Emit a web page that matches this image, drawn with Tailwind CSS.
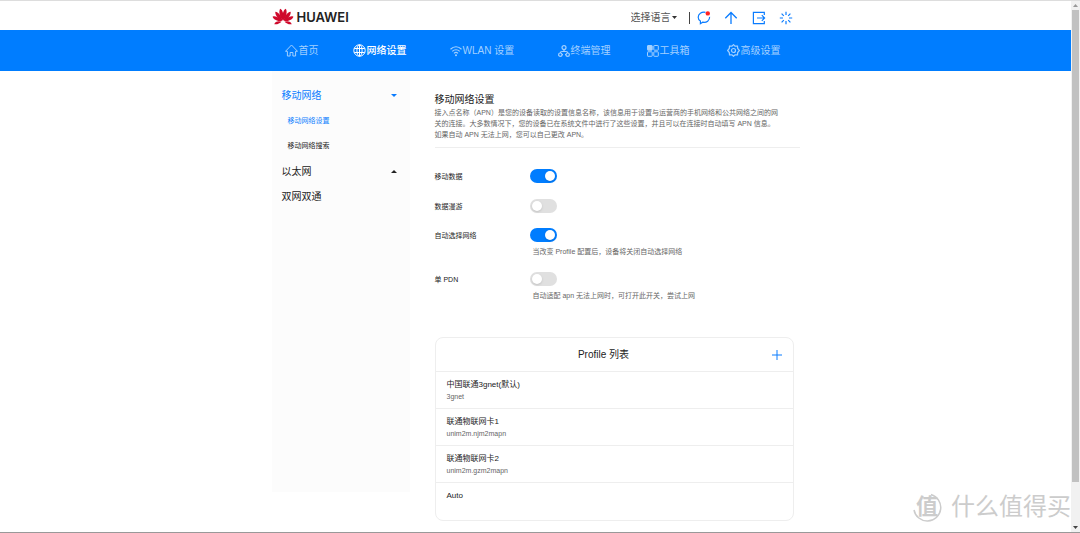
<!DOCTYPE html>
<html lang="zh-CN">
<head>
<meta charset="utf-8">
<meta name="viewport" content="width=device-width, initial-scale=1">
<title>移动网络设置</title>
<script src="https://cdn.jsdelivr.net/npm/@tailwindcss/browser@4"></script>
</head>
<body class="relative min-h-screen bg-white font-['Liberation_Sans','Noto_Sans_CJK_SC',sans-serif] text-[10px] leading-4 text-[#222]">
<div class="flex min-h-screen border-t border-[#ddd] border-b border-b-[#999]">
  <div class="min-w-0 flex-1">
    <header class="mx-auto flex h-[29px] max-w-[528px] items-center justify-between">
      <a href="#" class="flex items-center gap-[3px] pt-[2px] font-['Inter',sans-serif] text-[13px] font-semibold text-[#222]">
        <svg class="h-[18px] w-[22px]" viewBox="0 0 44 36" fill="#cf0a2c" aria-hidden="true">
          <path transform="rotate(-12 22 27)" d="M22 25C17.500 17 17 5 22 1c5 4 4.500 16 0 24z"/>
          <path transform="rotate(12 22 27)" d="M22 25C17.500 17 17 5 22 1c5 4 4.500 16 0 24z"/>
          <path transform="rotate(-38 22 27)" d="M22 25C17.500 18 17 7 22 2c5 5 4.500 16 0 23z"/>
          <path transform="rotate(38 22 27)" d="M22 25C17.500 18 17 7 22 2c5 5 4.500 16 0 23z"/>
          <path transform="rotate(-65 22 27)" d="M22 25C18 19 17 9 22 4c5 5 4 15 0 21z"/>
          <path transform="rotate(65 22 27)" d="M22 25C18 19 17 9 22 4c5 5 4 15 0 21z"/>
          <path transform="rotate(-98 22 27)" d="M22 24C20 20 17 15 19 9c6 2 6 10 3 15z"/>
          <path transform="rotate(98 22 27)" d="M22 24C24 20 27 15 25 9c-6 2-6 10-3 15z"/>
        </svg>
        <span>HUAWEI</span>
      </a>
      <div class="flex items-center pt-1 pr-[7px] text-[#0a7cff]">
        <label class="relative flex items-center text-[#555]">
          <select aria-label="选择语言" class="w-[46px] appearance-none bg-transparent text-[10px] leading-4"><option>选择语言</option><option>English</option></select>
          <svg class="pointer-events-none absolute right-0 h-[3px] w-[5px]" viewBox="0 0 5 3" fill="#333"><path d="M0 0h5L2.500 3z"/></svg>
        </label>
        <span class="ml-3 h-3 w-px bg-[#444]"></span>
        <button aria-label="消息" class="ml-[7px]"><svg class="size-[14px]" viewBox="0 0 14 14" fill="none" stroke="currentColor" stroke-width="1.200"><path d="M8.500 1.300C4.500.600 1.200 2.700 1.200 6.200c0 1.800.800 3 2.200 3.800v2.700l2.300-1.500c4 .700 7.100-1.600 6.900-5.300"/><circle cx="10.800" cy="2.400" r="2.200" fill="#f22" stroke="none"/></svg></button>
        <button aria-label="升级" class="ml-[13px]"><svg class="size-[14px]" viewBox="0 0 14 14" fill="none" stroke="currentColor" stroke-width="1.300"><path d="M7 13V1.500M1.300 7.200 7 1.500l5.700 5.700"/></svg></button>
        <button aria-label="退出" class="ml-[14px]"><svg class="size-[14px]" viewBox="0 0 14 14" fill="none" stroke="currentColor" stroke-width="1.200"><path d="M12.300 4V1.400H1.400v11.200h10.900V10M5 7h7.500M9.800 4.200 12.600 7 9.800 9.800"/></svg></button>
        <button aria-label="重启" class="ml-[13px]"><svg class="size-[14px]" viewBox="0 0 14 14" fill="none" stroke="currentColor" stroke-width="1.200"><path d="M7 .800v3.200M7 10v3.200M.800 7H4M10 7h3.200M2.600 2.600l2.200 2.200M9.200 9.200l2.200 2.200M11.400 2.600 9.200 4.800M4.800 9.200l-2.200 2.200"/></svg></button>
      </div>
    </header>

    <nav class="bg-[#007dff] text-[#a3d0ff]">
      <div class="mx-auto grid h-[41px] max-w-[528px] grid-cols-[68px_97px_108px_89px_80px_1fr] items-center pl-[13px] whitespace-nowrap">
        <a href="#" class="flex items-center gap-px"><svg class="size-[13px]" viewBox="0 0 13 13" fill="none" stroke="currentColor"><path d="M.500 7.300 6.500 1l6 6.300H10.600V12H7.900V8.500H5.100V12H2.400V7.300z"/></svg>首页</a>
        <a href="#" class="flex items-center gap-px font-medium text-white" aria-current="page"><svg class="size-[13px]" viewBox="0 0 13 13" fill="none" stroke="currentColor"><circle cx="6.500" cy="6.500" r="5.700"/><ellipse cx="6.500" cy="6.500" rx="2.600" ry="5.700"/><path d="M6.500 1v11M1.300 4.500h10.400M1.300 8.500h10.400"/></svg>网络设置</a>
        <a href="#" class="flex items-center gap-px"><svg class="size-[12px]" viewBox="0 0 12 12" fill="none" stroke="currentColor" stroke-width="1.200"><path d="M.500 4.300c3.300-3.200 7.700-3.200 11 0M2.300 6.400c2.200-2.200 5.200-2.200 7.400 0M4 8.400c1.200-1.200 2.800-1.200 4 0"/><circle cx="6" cy="10.200" r="1" fill="currentColor" stroke="none"/></svg>WLAN 设置</a>
        <a href="#" class="flex items-center gap-px"><svg class="size-[12px]" viewBox="0 0 12 12" fill="none" stroke="currentColor" stroke-width="1.200"><circle cx="6" cy="2.600" r="2"/><circle cx="2.300" cy="9.700" r="1.700"/><circle cx="9.700" cy="9.700" r="1.700"/><path d="M6 4.600v1.900M2.300 8C2.300 7 3 6.500 4 6.500h4c1 0 1.700.500 1.700 1.500M4 9.700h1M8 9.700H7"/></svg>终端管理</a>
        <a href="#" class="flex items-center gap-px"><svg class="size-[12px]" viewBox="0 0 12 12" fill="none" stroke="currentColor"><rect x=".5" y=".5" width="4.700" height="4.700" rx=".5" fill="currentColor"/><rect x="6.800" y=".5" width="4.500" height="4.700" rx=".5"/><rect x=".5" y="6.800" width="4.700" height="4.500" rx=".5"/><rect x="6.800" y="6.800" width="4.500" height="4.500" rx=".5"/></svg>工具箱</a>
        <a href="#" class="flex items-center gap-px"><svg class="size-[13px]" viewBox="0 0 13 13" fill="none" stroke="currentColor" stroke-width="1.200"><path d="M6.500.700 8 2.200l2.500-.1.200 2.300 1.700 2.100-1.700 2.100-.2 2.300-2.500-.1-1.500 1.500L5 10.800l-2.500.1-.2-2.300L.600 6.500l1.700-2.100.2-2.300 2.500.1z"/><circle cx="6.500" cy="6.500" r="2"/></svg>高级设置</a>
      </div>
    </nav>

    <div class="mx-auto flex max-w-[528px] items-start">
      <aside class="min-h-[421px] w-[138px] shrink-0 bg-[#fcfcfc] pt-3 pr-[13px] pl-[10px]">
        <a href="#" class="flex h-[25px] items-center justify-between text-[#0a7cff]">移动网络<svg class="h-[3px] w-[6px]" viewBox="0 0 6 3" fill="currentColor"><path d="M0 0h6L3 3z"/></svg></a>
        <a href="#" class="flex h-[25px] items-center pl-[6px] text-[7px] text-[#0a7cff]">移动网络设置</a>
        <a href="#" class="flex h-[25px] items-center pl-[6px] text-[7px]">移动网络搜索</a>
        <a href="#" class="mt-px flex h-[25px] items-center justify-between">以太网<svg class="h-[3px] w-[6px]" viewBox="0 0 6 3" fill="currentColor"><path d="M0 3h6L3 0z"/></svg></a>
        <a href="#" class="flex h-[25px] items-center">双网双通</a>
      </aside>

      <main class="ml-[25px] min-w-0 flex-1 pt-[21px]">
        <h1 class="text-[10px] leading-[15px]">移动网络设置</h1>
        <p class="whitespace-nowrap border-b border-[#eee] pb-[7px] text-[7px] leading-[11px] text-[#666]">接入点名称（APN）是您的设备读取的设置信息名称，该信息用于设置与运营商的手机网络和公共网络之间的网<br>关的连接。大多数情况下，您的设备已在系统文件中进行了这些设置，并且可以在连接时自动填写 APN 信息。<br>如果自动 APN 无法上网，您可以自己更改 APN。</p>

        <form class="pt-[13px] text-[7px]">
          <div class="flex h-[30px] pt-2">
            <label for="data" class="w-[95px] leading-4">移动数据</label>
            <input id="data" type="checkbox" checked class="h-[14px] w-[27px] appearance-none rounded-full bg-[#e0e0e0] p-[2px] before:block before:size-[10px] before:rounded-full before:bg-white before:shadow-sm checked:bg-[#007dff] checked:before:ml-[13px]">
          </div>
          <div class="flex h-[30px] pt-2">
            <label for="roam" class="w-[95px] leading-4">数据漫游</label>
            <input id="roam" type="checkbox" class="h-[14px] w-[27px] appearance-none rounded-full bg-[#e0e0e0] p-[2px] before:block before:size-[10px] before:rounded-full before:bg-white before:shadow-sm checked:bg-[#007dff] checked:before:ml-[13px]">
          </div>
          <div class="flex h-[44px] pt-[7px]">
            <label for="auto" class="w-[95px] leading-4">自动选择网络</label>
            <div>
              <input id="auto" type="checkbox" checked class="block h-[14px] w-[27px] appearance-none rounded-full bg-[#e0e0e0] p-[2px] before:block before:size-[10px] before:rounded-full before:bg-white before:shadow-sm checked:bg-[#007dff] checked:before:ml-[13px]">
              <p class="mt-1 ml-[3px] leading-[11px] text-[#666]">当改变 Profile 配置后，设备将关闭自动选择网络</p>
            </div>
          </div>
          <div class="flex h-[44px] pt-[7px]">
            <label for="pdn" class="w-[95px] leading-4">单 PDN</label>
            <div>
              <input id="pdn" type="checkbox" class="block h-[14px] w-[27px] appearance-none rounded-full bg-[#e0e0e0] p-[2px] before:block before:size-[10px] before:rounded-full before:bg-white before:shadow-sm checked:bg-[#007dff] checked:before:ml-[13px]">
              <p class="mt-1 ml-[3px] leading-[11px] text-[#666]">自动适配 apn 无法上网时，可打开此开关，尝试上网</p>
            </div>
          </div>
        </form>

        <section class="mt-7 mr-[6px] rounded-lg border border-[#eee]">
          <div class="flex h-[34px] items-center border-b border-[#eee] pr-[11px]">
            <h2 class="flex-1 text-center">Profile 列表</h2>
            <button aria-label="添加" class="text-[#0a7cff]"><svg class="size-[10px]" viewBox="0 0 10 10" stroke="currentColor"><path d="M5 0v10M0 5h10"/></svg></button>
          </div>
          <ul class="divide-y divide-[#eee] text-[8px]">
            <li class="h-[37px] px-[11px] pt-[6px]"><p class="leading-[13px]">中国联通3gnet(默认)</p><p class="text-[7px] leading-3 text-[#666]">3gnet</p></li>
            <li class="h-[37px] px-[11px] pt-[6px]"><p class="leading-[13px]">联通物联网卡1</p><p class="text-[7px] leading-3 text-[#666]">unim2m.njm2mapn</p></li>
            <li class="h-[37px] px-[11px] pt-[6px]"><p class="leading-[13px]">联通物联网卡2</p><p class="text-[7px] leading-3 text-[#666]">unim2m.gzm2mapn</p></li>
            <li class="h-[37px] px-[11px] pt-[6px]"><p class="leading-[13px]">Auto</p></li>
          </ul>
        </section>
      </main>
    </div>
  </div>

  <div class="flex w-[9px] flex-col items-center justify-between bg-[#f1f1f1]" aria-hidden="true">
    <svg class="my-[3px] h-[3px] w-[5px]" viewBox="0 0 5 3" fill="#999"><path d="M0 3h5L2.500 0z"/></svg>
    <div class="flex w-[7px] flex-1 flex-col"><div class="h-[92%] bg-[#c1c1c1]"></div></div>
    <svg class="my-[3px] h-[3px] w-[5px]" viewBox="0 0 5 3" fill="#444"><path d="M0 0h5L2.500 3z"/></svg>
  </div>
</div>

<div class="pointer-events-none absolute right-[9px] bottom-[10px] flex items-center gap-[9px] text-[#ccc]">
  <span class="relative flex size-[30px] items-center justify-center text-[22px] leading-none font-bold">
    <svg class="absolute inset-0 size-[30px]" viewBox="0 0 30 30" fill="none" stroke="currentColor" stroke-width="1.500" aria-hidden="true"><path d="M19 2.500A13.500 13.500 0 1 1 2 18"/></svg>值
  </span>
  <span class="text-[24px] leading-8">什么值得买</span>
</div>
</body>
</html>
